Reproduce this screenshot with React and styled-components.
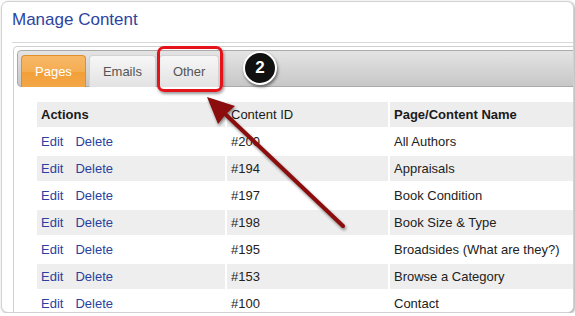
import React from 'react';
import styled, { createGlobalStyle } from 'styled-components';

const GlobalStyle = createGlobalStyle`
  body {
    margin: 0;
    background: #fff;
    font-family: "Liberation Sans", Arial, sans-serif;
  }
`

const rows = [
    { id: '#200', name: 'All Authors' },
    { id: '#194', name: 'Appraisals' },
    { id: '#197', name: 'Book Condition' },
    { id: '#198', name: 'Book Size & Type' },
    { id: '#195', name: 'Broadsides (What are they?)' },
    { id: '#153', name: 'Browse a Category' },
    { id: '#100', name: 'Contact' },
]

const tabs = ['Pages', 'Emails', 'Other']

const App = () => {
    return (
        <>
            <GlobalStyle />
            <Frame>
                <Title>Manage Content</Title>
                <Rule />
                <Panel>
                    <TabBar>
                        {tabs.map((tab, i) => (
                            <Tab key={tab} $active={i === 0}>{tab}</Tab>
                        ))}
                    </TabBar>
                    <Grid>
                        <HeadCell $bold>Actions</HeadCell>
                        <HeadCell>Content ID</HeadCell>
                        <HeadCell $bold>Page/Content Name</HeadCell>
                        {rows.map((row, i) => (
                            <React.Fragment key={row.id}>
                                <Cell $shaded={i % 2 === 1}>
                                    <ActionLink>Edit</ActionLink>
                                    <ActionLink>Delete</ActionLink>
                                </Cell>
                                <Cell $shaded={i % 2 === 1}>{row.id}</Cell>
                                <Cell $shaded={i % 2 === 1}>{row.name}</Cell>
                            </React.Fragment>
                        ))}
                    </Grid>
                </Panel>

                <Highlight />
                <Badge>2</Badge>
                <Arrow viewBox="0 0 575 316">
                    <line x1="343" y1="226" x2="222" y2="111" stroke="#8b0d0d" strokeWidth="4" strokeLinecap="round" />
                    <polygon points="207,97 235,106 226,114 218,124" fill="#8b0d0d" />
                </Arrow>
            </Frame>
        </>
    )
}

const Frame = styled.div`
  position: relative;
  box-sizing: border-box;
  margin: 1px 0 0 1px;
  width: 573px;
  height: 312px;
  padding: 0 0 0 10px;
  border: 1px solid #d2d2d2;
  border-radius: 7px;
  box-shadow: 1px 1px 3px rgba(0, 0, 0, 0.35);
  background: #fff;
  overflow: hidden;
`

const Title = styled.h1`
  margin: 8px 0 0;
  font-size: 17px;
  line-height: 20px;
  font-weight: normal;
  color: #2c44a0;
`

const Rule = styled.div`
  margin-top: 12px;
  border-top: 1px solid #d8d8d8;
`

const Panel = styled.div`
  width: 620px;
  margin: 3px 0 0 1px;
  padding: 3px;
  border: 1px solid #d0d0d0;
  border-radius: 4px;
`

const TabBar = styled.div`
  display: flex;
  gap: 3px;
  padding: 4px 3px 0;
  border: 1px solid #aaa;
  border-radius: 4px;
  background: linear-gradient(#e4e4e4, #c7c7c7);
`

const Tab = styled.div`
  height: 31px;
  margin-bottom: -1px;
  padding: 0 13px;
  border: 1px solid ${p => p.$active ? '#e0902a' : '#d3d3d3'};
  border-bottom: 0;
  border-radius: 4px 4px 0 0;
  font-size: 13px;
  line-height: 31px;
  color: ${p => p.$active ? '#fff' : '#555'};
  background: ${p => p.$active
        ? 'linear-gradient(#f7b867 0%, #f5ad52 50%, #f29f38 52%, #f3a747 100%)'
        : 'linear-gradient(#f7f7f7, #e2e2e2)'};
`

const Grid = styled.div`
  display: grid;
  grid-template-columns: 188px 161px 260px;
  grid-auto-rows: 25px;
  gap: 2px;
  margin: 15px 0 0 20px;
`

const HeadCell = styled.div`
  padding: 0 4px;
  background: #ededed;
  font-size: 13px;
  line-height: 25px;
  font-weight: ${p => p.$bold ? 'bold' : 'normal'};
  color: #1a1a1a;
  white-space: nowrap;
`

const Cell = styled.div`
  padding: 0 4px;
  background: ${p => p.$shaded ? '#eeeeee' : '#fff'};
  font-size: 13px;
  line-height: 25px;
  color: #222;
  white-space: nowrap;
`

const ActionLink = styled.span`
  color: #2d3f9e;
  margin-right: 12px;
`

const Highlight = styled.div`
  position: absolute;
  left: 155px;
  top: 44px;
  width: 66px;
  height: 46px;
  box-sizing: border-box;
  border: 3px solid #e5141b;
  border-radius: 7px;
  box-shadow: 1px 2px 3px rgba(0, 0, 0, 0.4);
`

const Badge = styled.div`
  position: absolute;
  left: 241px;
  top: 49px;
  width: 34px;
  height: 34px;
  box-sizing: border-box;
  border: 2px solid #fff;
  border-radius: 50%;
  background: #111;
  box-shadow: 1px 2px 3px rgba(0, 0, 0, 0.5);
  color: #fff;
  font-size: 17px;
  font-weight: bold;
  line-height: 30px;
  text-align: center;
`

const Arrow = styled.svg`
  position: absolute;
  left: -2px;
  top: -2px;
  width: 575px;
  height: 316px;
  pointer-events: none;
  filter: drop-shadow(1px 2px 1.5px rgba(0, 0, 0, 0.45));
`

export default App
